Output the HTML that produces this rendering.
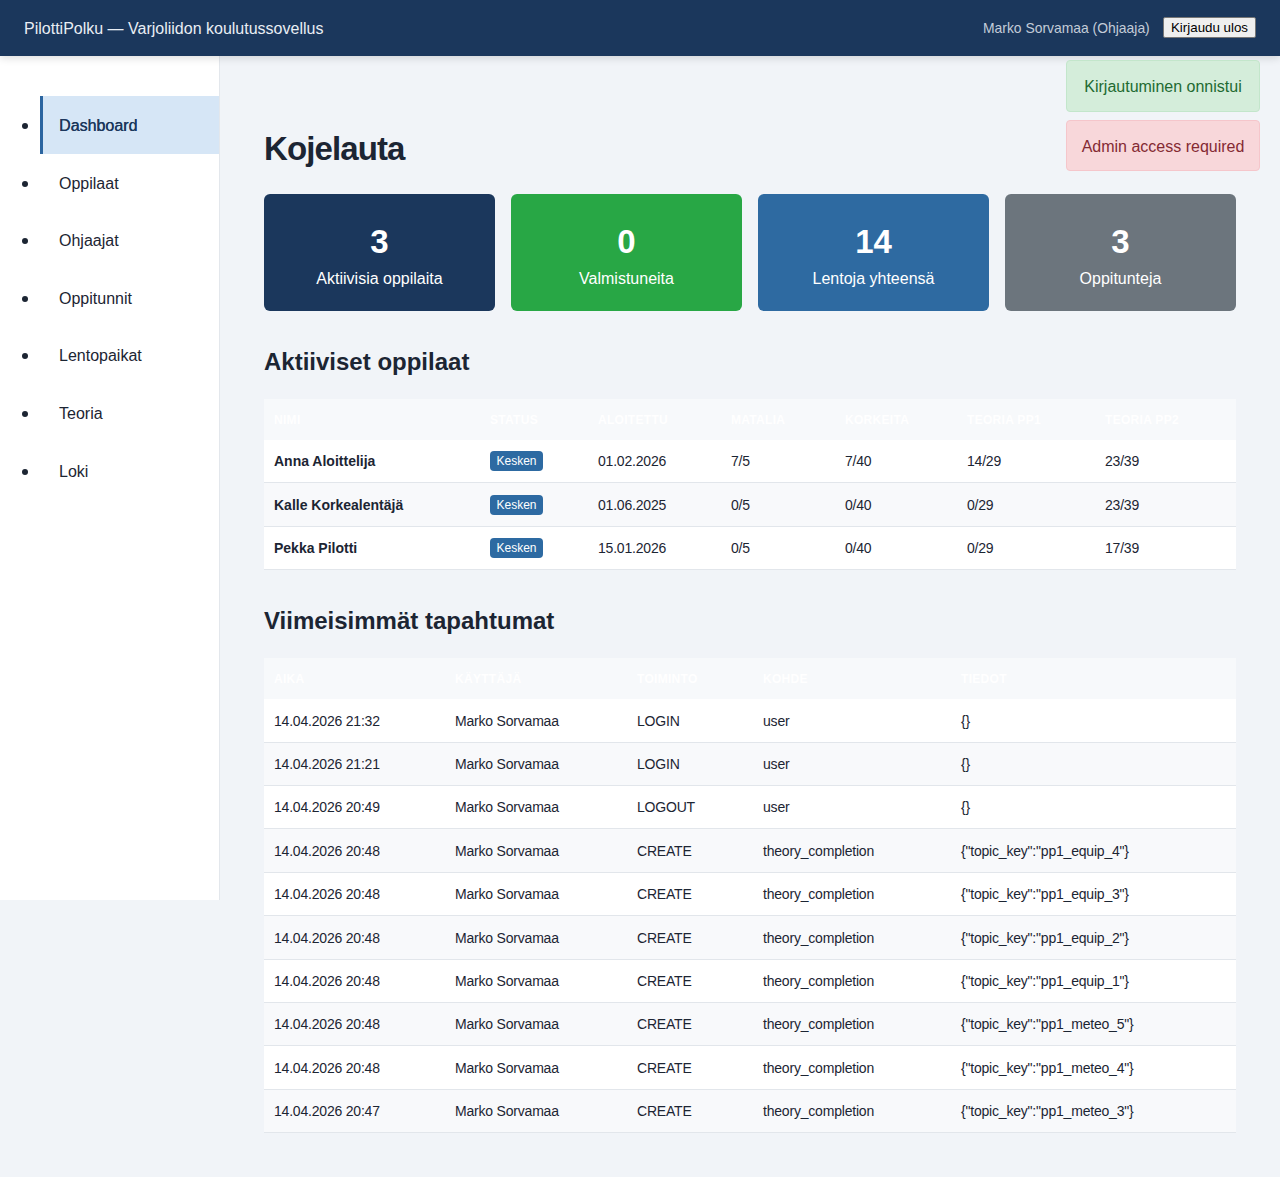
<!DOCTYPE html>
<html lang="fi">
<head>
<meta charset="utf-8">
<title>PilottiPolku</title>
<style>
* { box-sizing: border-box; }
html, body { margin: 0; padding: 0; }
body {
  width: 1280px; height: 1177px; overflow: hidden;
  background: #f1f4f8;
  font-family: "Liberation Sans", sans-serif;
  color: #1c2533;
  position: relative;
}
.topbar {
  position: absolute; left: 0; top: 0; width: 1280px; height: 56px;
  background: #1b375c;
  box-shadow: 0 2px 8px rgba(0,0,0,0.14);
  z-index: 5;
}
.brand {
  position: absolute; left: 24px; top: 19px;
  font-size: 16px; line-height: 20px; color: #e9eef4;
  white-space: nowrap;
}
.user {
  position: absolute; left: 983px; top: 20px;
  font-size: 13.9px; line-height: 16px; color: #c3ccd8; white-space: nowrap;
}
.logout {
  position: absolute; left: 1163px; top: 17px; width: 93px; height: 21px;
  background: #efefef; border: 1px solid #767676; border-radius: 2px;
  font-size: 13.33px; line-height: 19px; color: #000; text-align: center;
  white-space: nowrap;
}
.sidebar {
  position: absolute; left: 0; top: 56px; width: 220px; height: 844px;
  background: #fff; border-right: 1px solid #e3e7ec;
}
.nav { position: absolute; left: 0; top: 40px; width: 219px; }
.nav .it { position: relative; height: 57.6px; }
.nav .dot { position: absolute; left: 22px; top: 27px; width: 6px; height: 6px; border-radius: 50%; background: #1c2533; }
.nav .lk { position: absolute; left: 40px; top: 0; width: 179px; height: 58px; padding-left: 19px; font-size: 16px; line-height: 60px; color: #1c2533; }
.nav .it.act .lk { background: #d6e6f6; border-left: 3px solid #2b65a0; padding-left: 16px; color: #1b375c; text-shadow: 0.35px 0 0 #1b375c; }

.flash { position: absolute; left: 1066px; width: 194px; height: 51px; border-radius: 4px; font-size: 16px; line-height: 51px; text-align: center; z-index: 6; }
.flash.ok { top: 60px; height: 52px; line-height: 52px; background: #d4edda; border: 1px solid #c3e6cb; color: #226a31; }
.flash.err { top: 120px; background: #f8d7da; border: 1px solid #f5c6cb; color: #842a33; }

h1 { position: absolute; left: 264px; top: 129px; letter-spacing: -0.9px; margin: 0; font-size: 33px; line-height: 40px; font-weight: bold; color: #1c2533; }
.card { position: absolute; top: 194px; width: 231px; height: 117px; border-radius: 6px; color: #fff; text-align: center; }
.card .num { position: absolute; left: 0; right: 0; top: 28px; font-size: 33px; line-height: 40px; font-weight: bold; }
.card .lbl { position: absolute; left: 0; right: 0; top: 75px; font-size: 16px; line-height: 20px; }
h2 { position: absolute; left: 264px; margin: 0; font-size: 24px; line-height: 30px; font-weight: bold; color: #1c2533; }

table { position: absolute; left: 264px; width: 972px; border-collapse: collapse; table-layout: fixed; }
th { background: #f7f9fb; color: #fff; font-size: 12px; font-weight: bold; text-transform: uppercase; text-align: left; height: 41px; padding: 0 10px; letter-spacing: 0.3px; }
td { font-size: 14px; letter-spacing: -0.2px; height: 43.33px; padding: 0 10px; border-bottom: 1px solid #e2e6eb; white-space: nowrap; }
tr.h0 td { height: 43.5px; } tr.h1 td { height: 43px; } tr.h2 td { height: 43px; } tr.h3 td { height: 44px; } tr.h4 td { height: 43px; } tr.h5 td { height: 44px; } tr.h6 td { height: 43px; } tr.h7 td { height: 43px; } tr.h8 td { height: 44px; } tr.h9 td { height: 43px; }
tr.r1 td { height: 42.5px; } tr.r2 td { height: 44px; } tr.r3 td { height: 43px; }
tbody tr:nth-child(odd) td { background: #fff; }
tbody tr:nth-child(even) td { background: #f8f9fb; }
td b { letter-spacing: 0; }
.badge { letter-spacing: 0; display: inline-block; width: 53px; height: 20px; border-radius: 4px; background: #2d6aa2; color: #fff; font-size: 12px; line-height: 21px; text-align: center; vertical-align: middle; }
</style>
</head>
<body>
<div class="topbar">
  <div class="brand">PilottiPolku — Varjoliidon koulutussovellus</div>
  <div class="user">Marko Sorvamaa (Ohjaaja)</div>
  <div class="logout">Kirjaudu ulos</div>
</div>
<div class="sidebar">
  <div class="nav">
    <div class="it act"><span class="dot"></span><span class="lk">Dashboard</span></div>
    <div class="it"><span class="dot"></span><span class="lk">Oppilaat</span></div>
    <div class="it"><span class="dot"></span><span class="lk">Ohjaajat</span></div>
    <div class="it"><span class="dot"></span><span class="lk">Oppitunnit</span></div>
    <div class="it"><span class="dot"></span><span class="lk">Lentopaikat</span></div>
    <div class="it"><span class="dot"></span><span class="lk">Teoria</span></div>
    <div class="it"><span class="dot"></span><span class="lk">Loki</span></div>
  </div>
</div>

<div class="flash ok">Kirjautuminen onnistui</div>
<div class="flash err">Admin access required</div>

<h1>Kojelauta</h1>
<div class="card" style="left:264px;background:#1b375c"><div class="num">3</div><div class="lbl">Aktiivisia oppilaita</div></div>
<div class="card" style="left:511px;background:#28a745"><div class="num">0</div><div class="lbl">Valmistuneita</div></div>
<div class="card" style="left:758px;background:#2e6aa1"><div class="num">14</div><div class="lbl">Lentoja yhteensä</div></div>
<div class="card" style="left:1005px;background:#6c757d"><div class="num">3</div><div class="lbl">Oppitunteja</div></div>

<h2 style="top:347px">Aktiiviset oppilaat</h2>
<table style="top:399px">
  <colgroup><col style="width:216px"><col style="width:108px"><col style="width:133px"><col style="width:114px"><col style="width:122px"><col style="width:138px"><col style="width:141px"></colgroup>
  <thead><tr><th>Nimi</th><th>Status</th><th>Aloitettu</th><th>Matalia</th><th>Korkeita</th><th>Teoria PP1</th><th>Teoria PP2</th></tr></thead>
  <tbody>
    <tr class="r1"><td><b>Anna Aloittelija</b></td><td><span class="badge">Kesken</span></td><td>01.02.2026</td><td>7/5</td><td>7/40</td><td>14/29</td><td>23/39</td></tr>
    <tr class="r2"><td><b>Kalle Korkealentäjä</b></td><td><span class="badge">Kesken</span></td><td>01.06.2025</td><td>0/5</td><td>0/40</td><td>0/29</td><td>23/39</td></tr>
    <tr class="r3"><td><b>Pekka Pilotti</b></td><td><span class="badge">Kesken</span></td><td>15.01.2026</td><td>0/5</td><td>0/40</td><td>0/29</td><td>17/39</td></tr>
  </tbody>
</table>

<h2 style="top:606px">Viimeisimmät tapahtumat</h2>
<table style="top:658px">
  <colgroup><col style="width:181px"><col style="width:182px"><col style="width:126px"><col style="width:198px"><col style="width:285px"></colgroup>
  <thead><tr><th>Aika</th><th>Käyttäjä</th><th>Toiminto</th><th>Kohde</th><th>Tiedot</th></tr></thead>
  <tbody>
    <tr class="h0"><td>14.04.2026 21:32</td><td>Marko Sorvamaa</td><td>LOGIN</td><td>user</td><td>{}</td></tr>
    <tr class="h1"><td>14.04.2026 21:21</td><td>Marko Sorvamaa</td><td>LOGIN</td><td>user</td><td>{}</td></tr>
    <tr class="h2"><td>14.04.2026 20:49</td><td>Marko Sorvamaa</td><td>LOGOUT</td><td>user</td><td>{}</td></tr>
    <tr class="h3"><td>14.04.2026 20:48</td><td>Marko Sorvamaa</td><td>CREATE</td><td>theory_completion</td><td>{"topic_key":"pp1_equip_4"}</td></tr>
    <tr class="h4"><td>14.04.2026 20:48</td><td>Marko Sorvamaa</td><td>CREATE</td><td>theory_completion</td><td>{"topic_key":"pp1_equip_3"}</td></tr>
    <tr class="h5"><td>14.04.2026 20:48</td><td>Marko Sorvamaa</td><td>CREATE</td><td>theory_completion</td><td>{"topic_key":"pp1_equip_2"}</td></tr>
    <tr class="h6"><td>14.04.2026 20:48</td><td>Marko Sorvamaa</td><td>CREATE</td><td>theory_completion</td><td>{"topic_key":"pp1_equip_1"}</td></tr>
    <tr class="h7"><td>14.04.2026 20:48</td><td>Marko Sorvamaa</td><td>CREATE</td><td>theory_completion</td><td>{"topic_key":"pp1_meteo_5"}</td></tr>
    <tr class="h8"><td>14.04.2026 20:48</td><td>Marko Sorvamaa</td><td>CREATE</td><td>theory_completion</td><td>{"topic_key":"pp1_meteo_4"}</td></tr>
    <tr class="h9"><td>14.04.2026 20:47</td><td>Marko Sorvamaa</td><td>CREATE</td><td>theory_completion</td><td>{"topic_key":"pp1_meteo_3"}</td></tr>
  </tbody>
</table>
</body>
</html>
